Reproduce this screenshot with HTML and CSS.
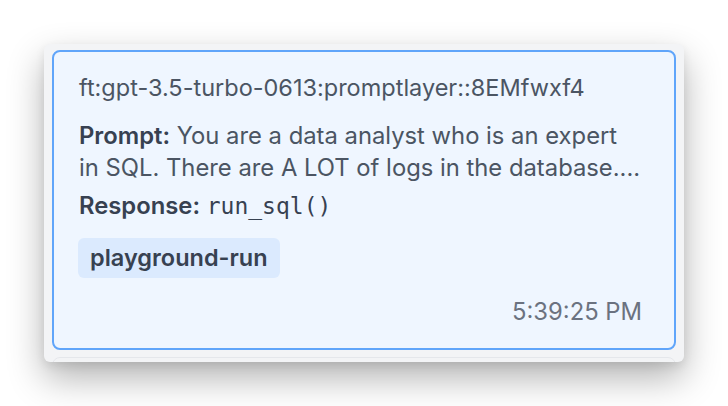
FILE: index.html
```html
<!DOCTYPE html>
<html>
<head>
<meta charset="utf-8">
<link rel="stylesheet" href="styles.css">
</head>
<body>
<div class="panel">
  <div class="card active">
    <div class="model">ft:gpt-3.5-turbo-0613:promptlayer::8EMfwxf4</div>
    <div class="prompt"><b>Prompt:</b> You are a data analyst who is an expert in SQL. There are A LOT of logs in the database....</div>
    <div class="response"><b>Response:</b> <code>run_sql()</code></div>
    <div class="tags"><span class="tag">playground-run</span></div>
    <div class="time">5:39:25 PM</div>
  </div>
  <div class="card next"></div>
</div>
</body>
</html>
```

FILE: styles.css
```css
html, body {
  margin: 0;
  background: #ffffff;
}
body {
  min-height: 406px;
  box-sizing: border-box;
  padding: 44px 0 0 44px;
  font-family: Inter, "Noto Sans", sans-serif;
}
.panel {
  width: 640px;
  height: 318px;
  box-sizing: border-box;
  padding: 6px 8px 0 8px;
  background: #f3f4f6;
  border-radius: 6px;
  overflow: hidden;
  display: flex;
  flex-direction: column;
  gap: 7px;
  box-shadow: 0 16px 36px rgba(0, 0, 0, 0.3), 0 4px 10px rgba(0, 0, 0, 0.08);
}
.card {
  flex: none;
  box-sizing: border-box;
  border-radius: 8px;
}
.active {
  height: 300px;
  border: 2px solid #60a5fa;
  background: #eff6ff;
  padding: 22px 32px 0 25px;
  display: flex;
  flex-direction: column;
  color: #374151;
  font-size: 23.8px;
}
.model {
  font-size: 23.5px;
  line-height: 28px;
  color: #4b5563;
}
.prompt {
  margin-top: 18px;
  line-height: 32px;
  color: #4b5563;
}
.prompt b, .response b {
  font-weight: 600;
  color: #374151;
}
.response {
  margin-top: 7px;
  line-height: 30px;
  color: #4b5563;
}
code {
  font-family: "DejaVu Sans Mono", monospace;
  font-size: 23px;
  color: #374151;
}
.tags {
  margin-top: 17px;
  display: flex;
}
.tag {
  background: #dbeafe;
  border-radius: 6px;
  padding: 0 12px 0 12px;
  height: 40px;
  line-height: 40px;
  font-size: 23.5px;
  font-weight: 600;
  color: #374151;
  margin-left: -1px;
}
.time {
  margin-top: 20px;
  align-self: flex-end;
  color: #6b7280;
  line-height: 28px;
}
.next {
  height: 40px;
  border: 1px solid #e5e7eb;
  background: #f3f4f6;
}
```
